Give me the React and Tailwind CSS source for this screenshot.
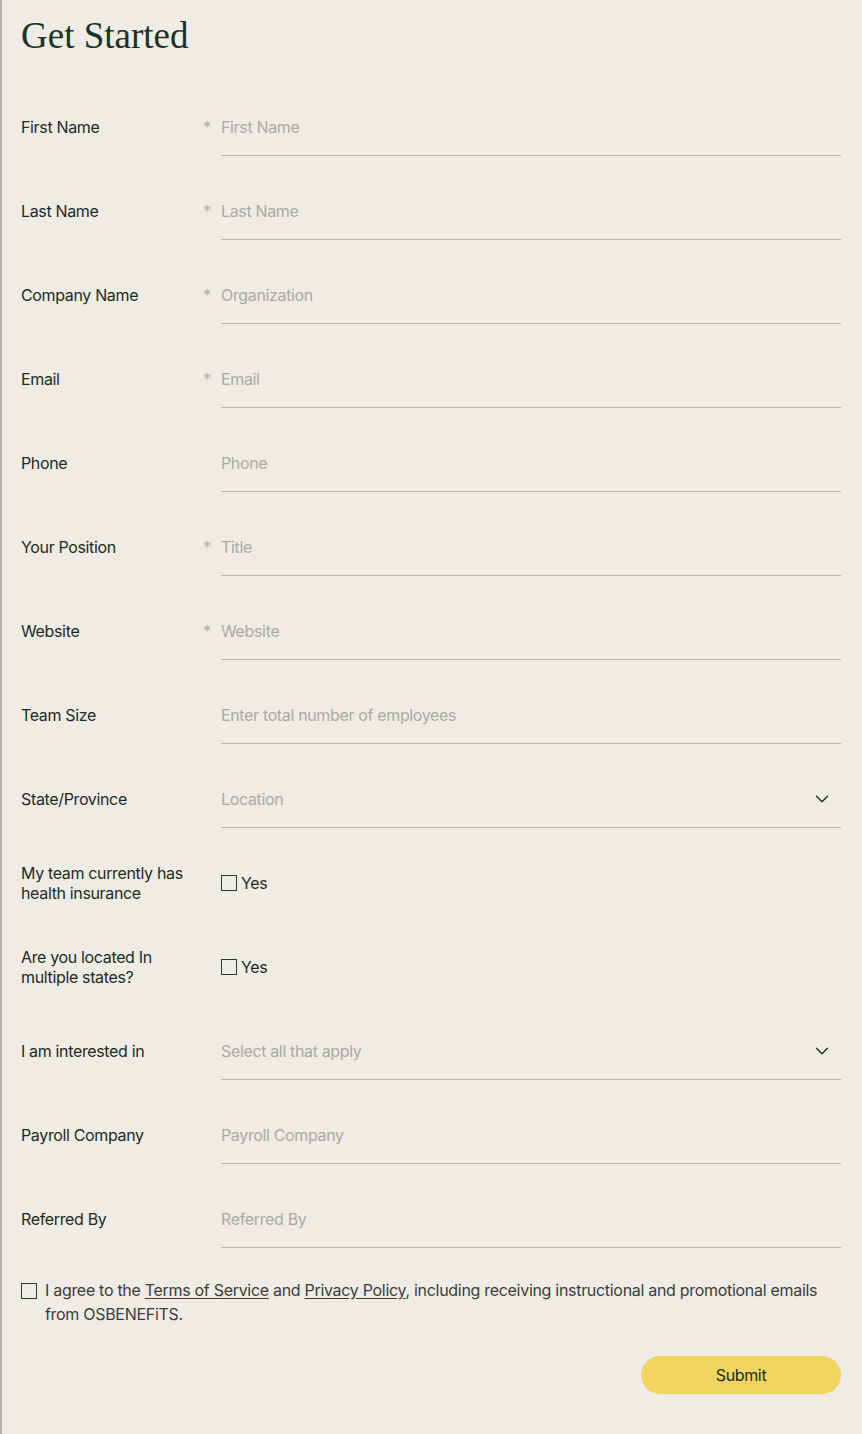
import { ChevronDown } from 'lucide-react';

const fields = [
  { label: 'First Name', placeholder: 'First Name', required: true },
  { label: 'Last Name', placeholder: 'Last Name', required: true },
  { label: 'Company Name', placeholder: 'Organization', required: true },
  { label: 'Email', placeholder: 'Email', required: true },
  { label: 'Phone', placeholder: 'Phone' },
  { label: 'Your Position', placeholder: 'Title', required: true },
  { label: 'Website', placeholder: 'Website', required: true },
  { label: 'Team Size', placeholder: 'Enter total number of employees' },
  { label: 'State/Province', placeholder: 'Location', type: 'select' },
  { label: 'My team currently has health insurance', type: 'checkbox' },
  { label: 'Are you located In multiple states?', type: 'checkbox' },
  { label: 'I am interested in', placeholder: 'Select all that apply', type: 'select' },
  { label: 'Payroll Company', placeholder: 'Payroll Company' },
  { label: 'Referred By', placeholder: 'Referred By' },
];

function Field({ field }) {
  if (field.type === 'checkbox') {
    return (
      <label className="-mt-[3px] flex flex-1 items-center gap-[4px] text-[#1d2a22]">
        <span className="h-4 w-4 border border-[#2a3a30] bg-transparent" />
        Yes
      </label>
    );
  }
  if (field.type === 'select') {
    return (
      <div className="flex h-full flex-1 items-center justify-between border-b border-[#b9b7b1] pb-[2px] pr-[8px] text-[#aaa9a4]">
        <span>{field.placeholder}</span>
        <ChevronDown size={22} strokeWidth={1.5} className="text-[#1d2a22]" />
      </div>
    );
  }
  return (
    <input
      type="text"
      placeholder={field.placeholder}
      className="h-full flex-1 border-b border-[#b9b7b1] bg-transparent pb-[2px] text-[#1d2a22] outline-none placeholder:text-[#aaa9a4]"
    />
  );
}

export default function App() {
  return (
    <div
      className="min-h-[1434px] border-l-2 border-[#b3b1ab] bg-[#efece6] pl-[19px] pr-[21px] pt-[14px] text-[16px] tracking-[-0.35px]"
      style={{ fontFamily: 'Inter, "Noto Sans", sans-serif' }}
    >
      <h1
        className="text-[37px] leading-[44px] tracking-[0px] text-[#1b3226]"
        style={{ fontFamily: '"Liberation Serif", "DejaVu Serif", serif' }}
      >
        Get Started
      </h1>

      <form className="mt-[42px] flex flex-col gap-[28px]">
        {fields.map((field) => (
          <div key={field.label} className="flex h-[56px] items-center">
            <div className="-mt-[2px] w-[182px] pr-2 leading-[20px] text-[#1d2a22]">{field.label}</div>
            <div className="-mt-[2px] w-[18px] text-[#a8b49a]">{field.required ? '*' : ''}</div>
            <Field field={field} />
          </div>
        ))}

        <div className="mt-[2px] flex items-start gap-[8px]">
          <span className="mt-[5px] h-4 w-4 shrink-0 border border-[#2a3a30]" />
          <p className="leading-[24px] tracking-[-0.3px] text-[#3a3d3a]">
            I agree to the <span className="underline underline-offset-2">Terms of Service</span> and{' '}
            <span className="underline underline-offset-2">Privacy Policy</span>, including receiving instructional and
            promotional emails from OSBENEFiTS.
          </p>
        </div>

        <div className="mt-[2px] flex justify-end">
          <button
            type="button"
            className="h-[38px] w-[200px] rounded-full bg-[#f2d460] text-[#1d2a22]"
          >
            Submit
          </button>
        </div>
      </form>
    </div>
  );
}
